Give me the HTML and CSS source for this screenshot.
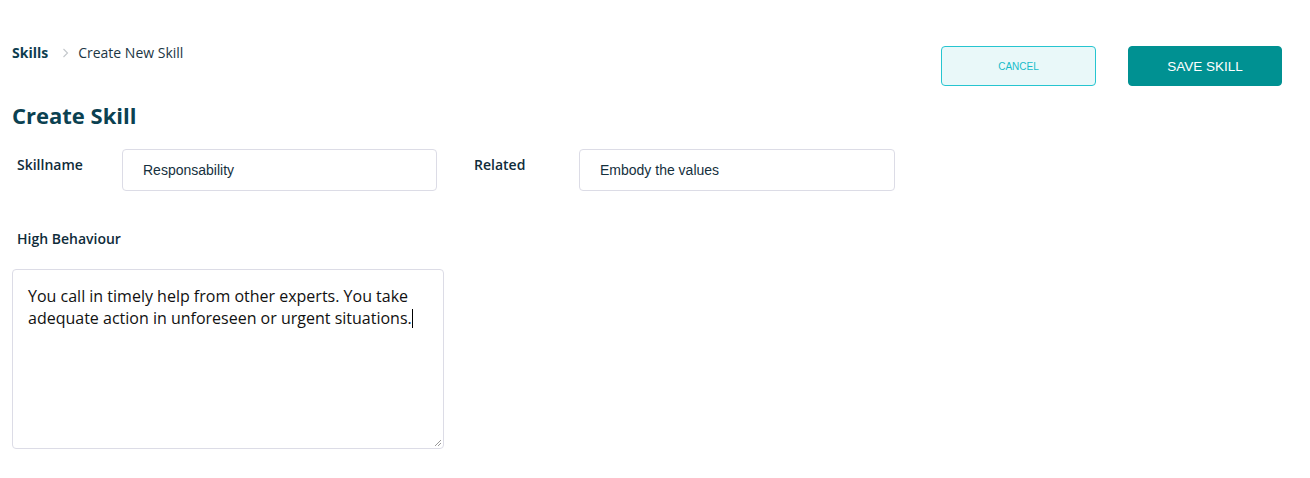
FILE: index.html
```html
<!DOCTYPE html>
<html lang="en">
<head>
<meta charset="utf-8">
<title>Create Skill</title>
<link rel="stylesheet" href="styles.css">
</head>
<body>
<div class="page">
  <header class="top">
    <nav class="crumbs">
      <span class="crumb-root">Skills</span>
      <svg class="chev" width="7" height="10" viewBox="0 0 7 10"><path d="M1.5 1 L5.5 5 L1.5 9" fill="none" stroke="#c3c7cb" stroke-width="1.1"/></svg>
      <span class="crumb-cur">Create New Skill</span>
    </nav>
    <div class="actions">
      <button class="btn btn-cancel">CANCEL</button>
      <button class="btn btn-save">SAVE SKILL</button>
    </div>
  </header>
  <h1 class="title">Create Skill</h1>
  <div class="row">
    <div class="field">
      <label class="label">Skillname</label>
      <div class="input">Responsability</div>
    </div>
    <div class="field field-2">
      <label class="label">Related</label>
      <div class="input input-2">Embody the values</div>
    </div>
  </div>
  <div class="block">
    <label class="label">High Behaviour</label>
    <div class="textarea">You call in timely help from other experts. You take adequate action in unforeseen or urgent situations.<span class="caret"></span>
      <svg class="grip" width="8" height="8" viewBox="0 0 8 8"><path d="M7 1 L1 7 M7 4 L4 7" stroke="#9a9a9a" stroke-width="1" fill="none"/></svg>
    </div>
  </div>
</div>
</body>
</html>
```
FILE: styles.css
```css
* { box-sizing: border-box; }
html, body { margin: 0; padding: 0; background: #ffffff; }
body { font-family: "Open Sans", "Liberation Sans", sans-serif; color: #0d3d4f; }
.page { padding: 0 28px 0 12px; }
.top { display: flex; justify-content: space-between; align-items: flex-start; padding-top: 43px; }
.crumbs { display: flex; align-items: center; font-size: 14px; line-height: 20px; }
.crumb-root { font-weight: 700; color: #0d3d4f; }
.chev { margin: 0 9px 0 14px; }
.crumb-cur { color: #1b3644; }
.actions { display: flex; gap: 32px; margin-top: 3px; }
.btn { font-family: "Liberation Sans", Arial, sans-serif; border-radius: 4px; height: 40px; cursor: pointer; padding: 0; }
.btn-cancel { width: 155px; background: #e9f8f9; border: 1px solid #26c5d0; color: #16bcc9; font-size: 10px; }
.btn-save { width: 154px; background: #009192; border: 1px solid #009192; color: #ffffff; font-size: 13.5px; }
.title { margin: 14px 0 0; font-size: 22px; line-height: 30px; font-weight: 700; color: #0b4151; }
.row { display: flex; margin-top: 19px; padding-left: 5px; }
.field { display: flex; align-items: flex-start; }
.field-2 { margin-left: 37px; }
.label { display: block; width: 105px; font-size: 14px; line-height: 20px; font-weight: 600; color: #0f2c3a; margin-top: 6px; }
.input { width: 315px; height: 42px; border: 1px solid #dcdce6; border-radius: 4px; padding: 0 20px; display: flex; align-items: center; font-family: "Liberation Sans", Arial, sans-serif; font-size: 14px; color: #15303d; }
.input-2 { width: 316px; }
.block { margin-top: 38px; }
.block .label { margin: 0 0 0 5px; width: auto; }
.textarea { position: relative; margin-top: 20px; width: 432px; height: 180px; border: 1px solid #dcdce6; border-radius: 4px; padding: 15px 20px 0 15px; font-size: 16px; line-height: 22px; color: #111111; }
.caret { display: inline-block; width: 1px; height: 19px; background: #000; vertical-align: -4px; }
.grip { position: absolute; right: 1px; bottom: 1px; }
```
